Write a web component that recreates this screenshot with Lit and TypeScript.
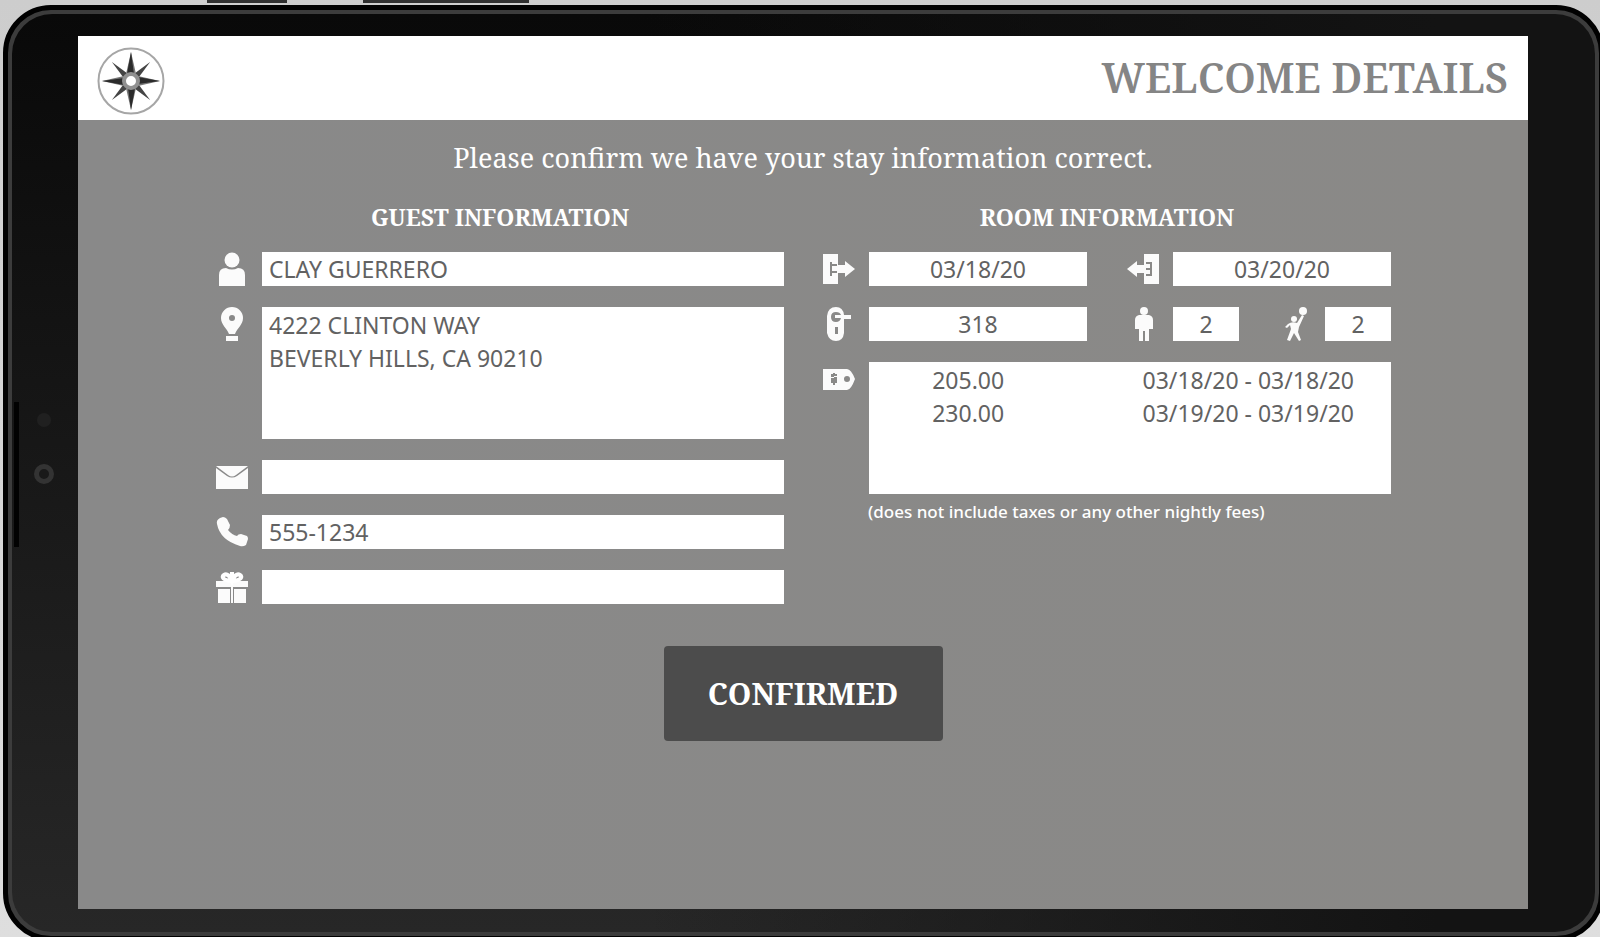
import { LitElement, html, css, svg } from "lit";
import { customElement, property, state } from "lit/decorators.js";

const glyphs: Record<string, unknown> = {
  person: svg`<circle cx="16" cy="8" r="7.5"/><path d="M3 34V23q0-7 7-7q6 3 12 0q7 0 7 7v11z"/>`,
  pin: svg`<path fill-rule="evenodd" d="M16 0a11 11 0 0 1 11 11c0 7-6 10-8 16h-6C11 21 5 18 5 11A11 11 0 0 1 16 0zm0 8a3 3 0 1 0 0 6a3 3 0 0 0 0-6z"/><path d="M10 29h12v5H10z"/>`,
  mail: svg`<path d="M0 6h32L20 15q-4 3-8 0z"/><path d="M0 8l11 8q5 3 10 0l11-8v21H0z"/>`,
  phone: svg`<path d="M1 9Q0 5 4 3l3-1q2 0 4 2l3 6q0 3-2 5q4 5 9 6q1-2 4-2l6 2q1 1 1 3l-2 6q-3 2-6 1Q4 25 1 9z"/>`,
  gift: svg`<path d="M0 11h15v6H0zM17 11h15v6H17zM2 19h12v14H2zM18 19h12v14H18zM15 12h2v21h-2z"/><path fill="none" stroke="#fff" stroke-width="4" d="M15 11C7 10 5 7 8 5s6 1 8 6c2-5 5-8 8-6s1 5-7 6M16 10V2"/>`,
  arrive: svg`<path fill-rule="evenodd" d="M0 2h15v11h7V9l10 8l-10 8v-4h-7v11H0zM7 10v14h2v-3h5v-2H9v-5h5v-2H9v-2z"/>`,
  depart: svg`<path fill-rule="evenodd" d="M32 2H17v11h-7V9L0 17l10 8v-4h7v11h15zM19 10h6v14h-6v-2h4v-4h-4v-2h4v-4h-4z"/>`,
  lock: svg`<path fill-rule="evenodd" d="M13 0q7 0 8 8h7v4h-7v14q-1 8-8 8t-9-8V9q1-9 9-9zm0 5q-5 0-5 5t5 5q4 0 5-4h-6V8h6q-1-3-5-3zm-1 15v7h3v-7z"/>`,
  tag: svg`<path fill-rule="evenodd" d="M0 7h24q4 0 8 10q-4 11-8 11H0zM8 12v3h3v1H8v5h2v2h2v-2h2v-6h-3v-1h3v-2h-2v-1h-2v1zm16 2a3 3 0 1 0 0 6a3 3 0 0 0 0-6z"/>`,
  adult: svg`<circle cx="17" cy="4" r="4"/><path d="M12 8h10q4 1 4 5v9h-4v12h-4V24h-2v10h-4V22H8v-9q0-4 4-5z"/>`,
  child: svg`<circle cx="24" cy="4" r="4"/><circle cx="15" cy="12" r="3"/><path d="M9 17q4-3 9-1l5-8l2 1l-5 11l-1 5l3 8l-2 1l-5-8l-4 8l-3-1l4-11l-1-4l-3 3l-2-1z"/>`,
};

@customElement("field-icon")
class FieldIcon extends LitElement {
  @property() name = "person";
  static styles = css`
    :host { display: block; flex: none; width: 32px; height: 34px; }
    svg { display: block; width: 100%; height: 100%; fill: #fbfbfb; }
  `;
  render() {
    return html`<svg viewBox="0 0 32 34" aria-hidden="true">${glyphs[this.name]}</svg>`;
  }
}

@customElement("compass-logo")
class CompassLogo extends LitElement {
  static styles = css`
    :host { display: block; width: 68px; height: 68px; }
    svg { display: block; width: 100%; height: 100%; }
  `;
  render() {
    const quarters = [0, 90, 180, 270];
    return html`<svg viewBox="-34 -34 68 68" role="img" aria-label="Compass">
      <circle r="32.5" fill="#fff" stroke="#a6a6a6" stroke-width="2" />
      ${quarters.map((a) => svg`<path transform="rotate(${a + 45})" d="M0-27L3-7H-3z" fill="#444"/>`)}
      ${quarters.map((a) => svg`<g transform="rotate(${a})"><path d="M0-29L5-7H-5z" fill="#777"/><path d="M0-29L3-7H-4z" fill="#2b2b2b"/></g>`)}
      <circle r="7" fill="#fff" stroke="#909090" stroke-width="4" />
    </svg>`;
  }
}

@customElement("app-root")
class AppRoot extends LitElement {
  @state() private rates = [
    { amount: "205.00", nights: "03/18/20 - 03/18/20" },
    { amount: "230.00", nights: "03/19/20 - 03/19/20" },
  ];

  static styles = css`
    :host {
      --serif: "Noto Serif", "DejaVu Serif Condensed", "DejaVu Serif", serif;
      --sans: "Noto Sans", "Open Sans", sans-serif;
      display: flex;
      position: relative;
      box-sizing: border-box;
      min-height: 100vh;
      padding: 5px 0 0 3px;
      overflow: hidden;
      background: linear-gradient(#cdcdcd, #dedede);
      font-family: var(--sans);
    }
    * { box-sizing: border-box; }
    .side-key {
      position: absolute;
      top: 0;
      height: 3px;
      background: #303030;
    }
    .power { left: 207px; width: 80px; }
    .volume { left: 363px; width: 166px; }
    .device {
      position: relative;
      flex: 1;
      display: flex;
      margin: 0 -4px -4px 0;
      border: 5px solid #010101;
      border-radius: 48px;
      background: #3c3c3c;
    }
    .bezel {
      flex: 1;
      display: flex;
      margin: 4px;
      padding: 22px 67px 23px 66px;
      border-radius: 40px;
      background:
        linear-gradient(to right, transparent 40%, #131313 90%),
        linear-gradient(#090909, #272727);
    }
    .speaker {
      position: absolute;
      left: 6px;
      top: 392px;
      width: 5px;
      height: 145px;
      background: #020202;
    }
    .sensor {
      position: absolute;
      left: 29px;
      top: 403px;
      width: 14px;
      height: 14px;
      border-radius: 50%;
      background: #202020;
    }
    .camera {
      position: absolute;
      left: 26px;
      top: 454px;
      width: 20px;
      height: 20px;
      border: 5px solid #333;
      border-radius: 50%;
      background: #191919;
    }
    .screen {
      flex: 1;
      background: linear-gradient(to right, #898989, #8a8987);
      color: #fff;
    }
    header {
      display: flex;
      align-items: flex-end;
      justify-content: space-between;
      height: 84px;
      padding: 0 20px 5px 19px;
      background: #fff;
    }
    h1, h2, p { margin: 0; }
    h1 {
      padding-bottom: 14px;
      color: #858585;
      font: 600 41px/48px var(--serif);
    }
    .lead {
      padding-top: 20px;
      font: 27px/36px var(--serif);
      text-align: center;
    }
    .columns {
      display: grid;
      grid-template-columns: 1fr 1fr;
      gap: 39px;
      padding: 27px 137px 0 138px;
    }
    section {
      display: flex;
      flex-direction: column;
      gap: 21px;
      min-width: 0;
    }
    h2 {
      font: bold 23px/28px var(--serif);
      text-align: center;
    }
    .row { display: flex; gap: 14px; }
    .pair {
      display: grid;
      grid-template-columns: 1fr 1fr;
      gap: 40px;
    }
    .counts { display: flex; justify-content: space-between; }
    input, textarea, .rates {
      flex: 1;
      display: block;
      min-width: 0;
      margin: 0;
      border: 0;
      border-radius: 0;
      background: #fff;
      color: #626262;
      font: 23px/33px var(--sans);
      outline-offset: 2px;
    }
    input { width: 100%; height: 34px; padding: 0 7px; }
    textarea { height: 132px; padding: 2px 7px; resize: none; }
    .center { text-align: center; }
    .counts input { flex: none; width: 66px; }
    .rates { height: 132px; padding-top: 2px; }
    table { width: 100%; border-collapse: collapse; }
    td { padding: 0; height: 33px; }
    .amount { width: 38%; text-align: center; }
    .nights { padding-right: 37px; text-align: right; }
    .note {
      margin-top: -15px;
      padding-left: 45px;
      font-size: 17px;
      font-weight: 500;
      line-height: 24px;
    }
    .actions { display: flex; justify-content: center; padding-top: 42px; }
    button {
      min-width: 279px;
      height: 95px;
      padding: 0 32px;
      border: 0;
      border-radius: 4px;
      background: #4c4c4c;
      color: #fff;
      font: bold 30px/36px var(--serif);
      cursor: pointer;
    }
  `;

  private field(icon: string, label: string, value: string, cls = "") {
    return html`<div class="row">
      <field-icon name=${icon}></field-icon>
      <input class=${cls} aria-label=${label} .value=${value} />
    </div>`;
  }

  render() {
    return html`
      <div class="side-key power"></div>
      <div class="side-key volume"></div>
      <div class="device">
        <div class="speaker"></div>
        <div class="sensor"></div>
        <div class="camera"></div>
        <div class="bezel">
          <main class="screen">
            <header>
              <compass-logo></compass-logo>
              <h1>WELCOME DETAILS</h1>
            </header>
            <p class="lead">Please confirm we have your stay information correct.</p>
            <div class="columns">
              <section>
                <h2>GUEST INFORMATION</h2>
                ${this.field("person", "Guest name", "CLAY GUERRERO")}
                <div class="row">
                  <field-icon name="pin"></field-icon>
                  <textarea aria-label="Address" .value=${"4222 CLINTON WAY\nBEVERLY HILLS, CA 90210"}></textarea>
                </div>
                ${this.field("mail", "Email", "")}
                ${this.field("phone", "Phone", "555-1234")}
                ${this.field("gift", "Rewards", "")}
              </section>
              <section>
                <h2>ROOM INFORMATION</h2>
                <div class="pair">
                  ${this.field("arrive", "Arrival date", "03/18/20", "center")}
                  ${this.field("depart", "Departure date", "03/20/20", "center")}
                </div>
                <div class="pair">
                  ${this.field("lock", "Room number", "318", "center")}
                  <div class="counts">
                    ${this.field("adult", "Adults", "2", "center")}
                    ${this.field("child", "Children", "2", "center")}
                  </div>
                </div>
                <div class="row">
                  <field-icon name="tag"></field-icon>
                  <div class="rates">
                    <table aria-label="Nightly rates">
                      <tbody>
                        ${this.rates.map((r) => html`<tr><td class="amount">${r.amount}</td><td class="nights">${r.nights}</td></tr>`)}
                      </tbody>
                    </table>
                  </div>
                </div>
                <p class="note">(does not include taxes or any other nightly fees)</p>
              </section>
            </div>
            <div class="actions"><button type="button">CONFIRMED</button></div>
          </main>
        </div>
      </div>
    `;
  }
}
